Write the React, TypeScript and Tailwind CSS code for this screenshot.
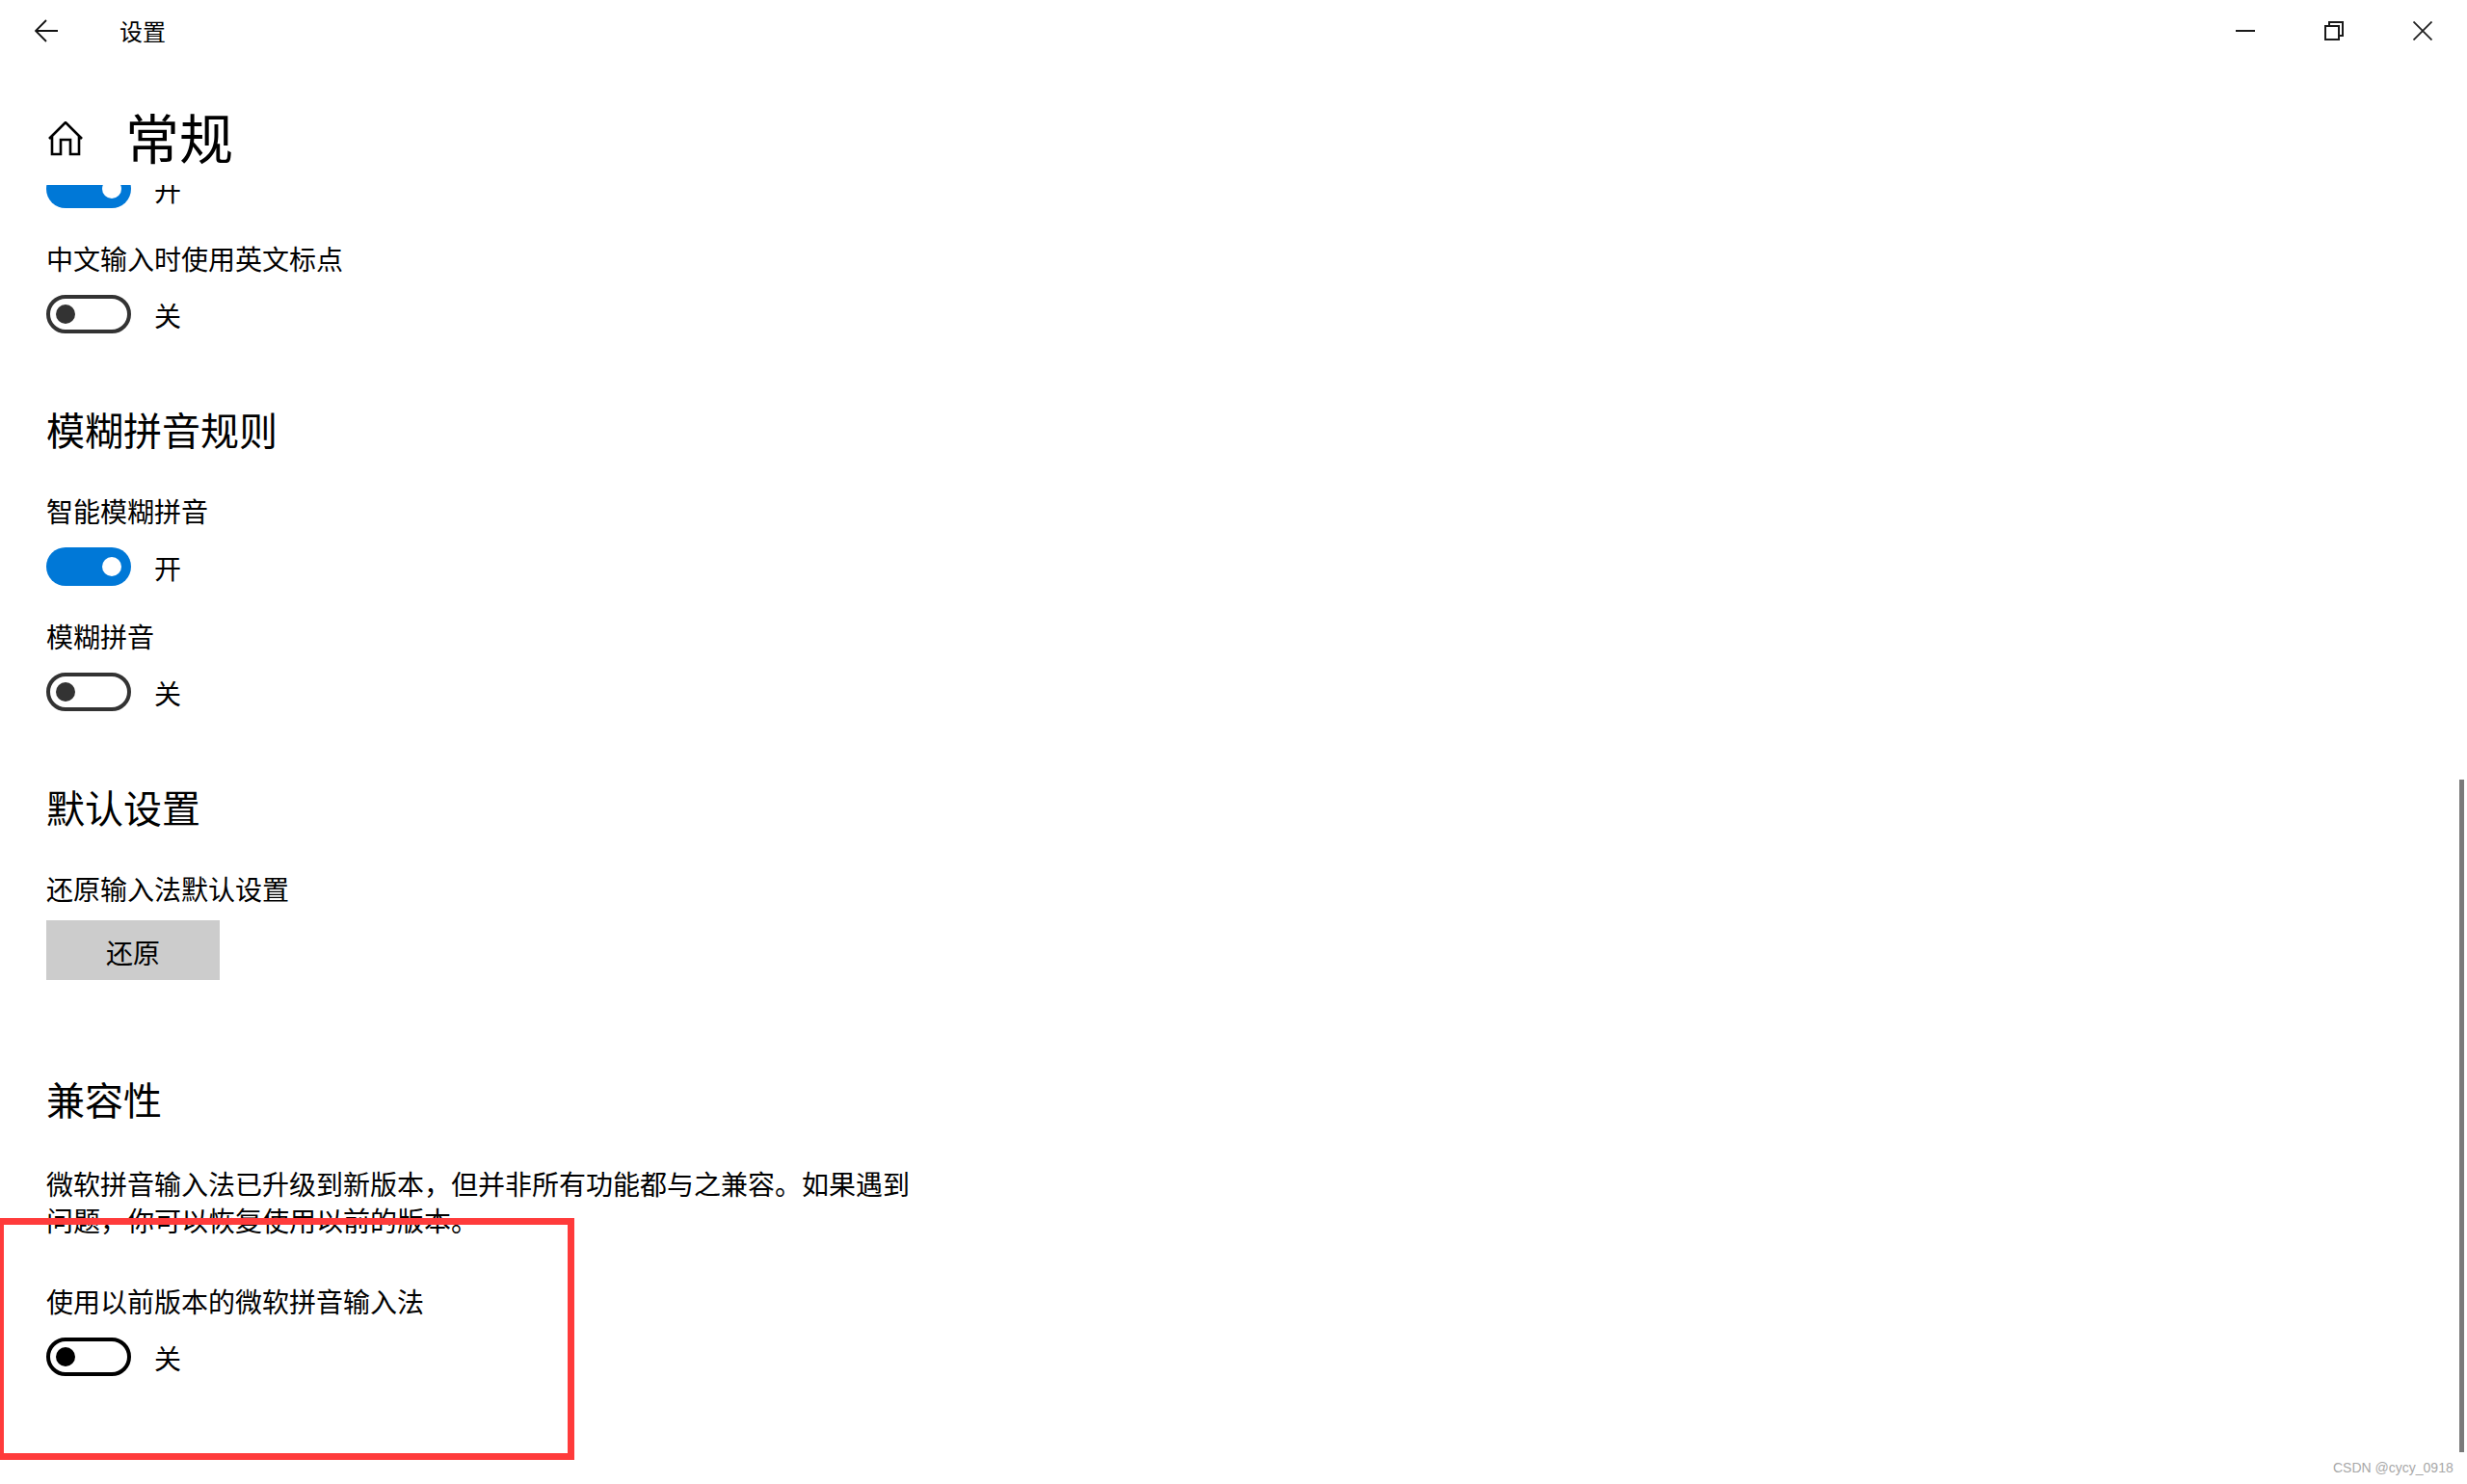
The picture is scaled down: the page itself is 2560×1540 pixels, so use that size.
import React from 'react';

const Toggle: React.FC<{ on?: boolean; dark?: boolean }> = ({ on, dark }) => (
  <div className="mt-[19px] flex h-10 items-center gap-6 text-[28px] leading-[38px]">
    {on ? (
      <div className="flex h-10 w-[88px] items-center justify-end rounded-full bg-[#0078d7] pr-[10px]">
        <div className="h-5 w-5 rounded-full bg-white" />
      </div>
    ) : (
      <div
        className={
          dark
            ? 'flex h-10 w-[88px] items-center rounded-full border-4 border-black pl-1.5'
            : 'flex h-10 w-[88px] items-center rounded-full border-4 border-[#333333] pl-1.5'
        }
      >
        <div className={dark ? 'h-5 w-5 rounded-full bg-black' : 'h-5 w-5 rounded-full bg-[#333333]'} />
      </div>
    )}
    <span className="pt-[2px]">{on ? '开' : '关'}</span>
  </div>
);

export default function App() {
  return (
    <div
      lang="zh-CN"
      className="relative h-[1540px] w-[2560px] overflow-hidden bg-white font-['Noto_Sans_CJK_SC','Noto_Sans',sans-serif] text-black"
    >
      <header className="flex h-16 items-center justify-between pl-9 pr-9">
        <div className="flex items-center">
          <svg width="24" height="24" viewBox="0 0 24 24" fill="none" stroke="#111" strokeWidth="1.8">
            <path d="M24 12H1M12 1L1 12l11 11" />
          </svg>
          <span className="ml-16 text-2xl">设置</span>
        </div>
        <div className="flex items-center gap-[72px]">
          <svg width="20" height="20" viewBox="0 0 20 20" fill="none" stroke="#1a1a1a" strokeWidth="2">
            <path d="M0 10h20" />
          </svg>
          <svg width="20" height="20" viewBox="0 0 20 20" fill="none" stroke="#1a1a1a" strokeWidth="2">
            <path d="M1 5h14v14H1zM5 5V1h14v14h-4" />
          </svg>
          <svg width="20" height="20" viewBox="0 0 20 20" fill="none" stroke="#222" strokeWidth="1.8">
            <path d="M0.5 0.5l19 19M19.500 0.5l-19 19" />
          </svg>
        </div>
      </header>

      <div className="mt-10 flex h-20 items-center pl-[50px]">
        <svg width="36" height="36" viewBox="0 0 36 36" fill="none" stroke="#000" strokeWidth="2.6">
          <path d="M1 18L18 1l17 17M4 15v19h9V19h10v15h9V15" />
        </svg>
        <h1 className="-mt-[6px] ml-11 text-[56px] leading-[80px]">常规</h1>
      </div>

      <main className="mt-2 h-[1348px] overflow-hidden pl-12">
        <div className="-mt-[35px]">
          <Toggle on />
          <p className="mt-[33px] text-[28px] leading-[38px]">中文输入时使用英文标点</p>
          <Toggle />

          <h2 className="mt-[71px] text-[40px] leading-[56px]">模糊拼音规则</h2>
          <p className="mt-[38px] text-[28px] leading-[38px]">智能模糊拼音</p>
          <Toggle on />
          <p className="mt-[33px] text-[28px] leading-[38px]">模糊拼音</p>
          <Toggle />

          <h2 className="mt-[71px] text-[40px] leading-[56px]">默认设置</h2>
          <p className="mt-[38px] text-[28px] leading-[38px]">还原输入法默认设置</p>
          <button className="mt-[14px] flex h-[62px] w-[180px] items-center justify-center bg-[#cccccc] pt-[3px] text-[28px] leading-[38px]">
            还原
          </button>

          <h2 className="mt-[95px] text-[40px] leading-[56px]">兼容性</h2>
          <p className="mt-[41px] w-[900px] text-[28px] leading-[38px]">
            微软拼音输入法已升级到新版本，但并非所有功能都与之兼容。如果遇到问题，你可以恢复使用以前的版本。
          </p>
          <p className="mt-[46px] text-[28px] leading-[38px]">使用以前版本的微软拼音输入法</p>
          <Toggle dark />
        </div>
      </main>

      <div className="absolute left-[2552px] top-[809px] h-[698px] w-[5px] bg-[#7a7a7a]" />
      <div className="absolute -left-[3px] top-[1264px] h-[251px] w-[599px] border-[7px] border-[#ff3b3b]" />
      <span className="absolute left-[2421px] top-[1515px] whitespace-nowrap font-['Liberation_Sans',sans-serif] text-[14px] leading-[16px] text-[#a8a8a8]">
        CSDN @cycy_0918
      </span>
    </div>
  );
}
